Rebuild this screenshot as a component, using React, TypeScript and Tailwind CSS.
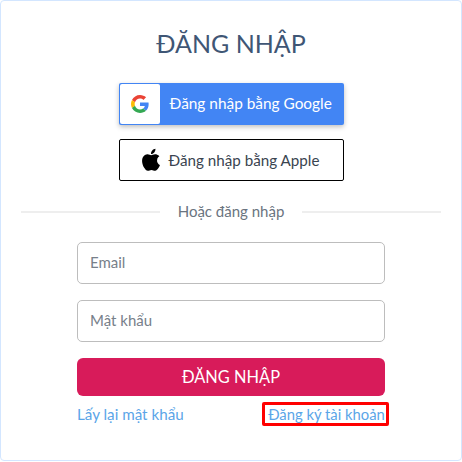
import { type FC } from 'react';

const GoogleIcon: FC = () => (
    <svg width="18" height="18" viewBox="0 0 48 48">
        <path fill="#EA4335" d="M24 9.5c3.5 0 6.7 1.2 9.2 3.6l6.9-6.9C35.900 2.400 30.500 0 24 0 14.600 0 6.500 5.400 2.600 13.200l8 6.200C12.500 13.700 17.800 9.500 24 9.500z" />
        <path fill="#4285F4" d="M47 24.500c0-1.600-.1-3.100-.4-4.500H24v9h12.900c-.6 3-2.200 5.500-4.800 7.200l7.700 6C44.300 38 47 31.800 47 24.500z" />
        <path fill="#FBBC05" d="M10.600 28.600c-.5-1.400-.8-3-.8-4.600s.3-3.200.8-4.600l-8-6.200C.9 16.500 0 20.100 0 24s.9 7.500 2.600 10.800l8-6.200z" />
        <path fill="#34A853" d="M24 48c6.500 0 11.900-2.100 15.800-5.800l-7.700-6c-2.100 1.400-4.900 2.300-8.100 2.300-6.200 0-11.500-4.200-13.400-9.900l-8 6.200C6.500 42.600 14.600 48 24 48z" />
    </svg>
);

const AppleIcon: FC = () => (
    <svg width="24" height="24" viewBox="0 0 24 24" fill="#000">
        <path d="M17.050 12.540c-.03-2.780 2.270-4.120 2.370-4.180-1.290-1.890-3.300-2.150-4.020-2.180-1.710-.17-3.340 1.010-4.210 1.010-.87 0-2.210-.98-3.630-.96-1.870.03-3.590 1.090-4.550 2.760-1.940 3.370-.5 8.350 1.390 11.080.92 1.340 2.020 2.840 3.460 2.790 1.390-.06 1.920-.9 3.600-.9s2.150.9 3.620.87c1.500-.03 2.450-1.360 3.360-2.710 1.060-1.550 1.500-3.060 1.520-3.130-.03-.02-2.910-1.120-2.910-4.450zM14.290 4.380c.77-.93 1.280-2.220 1.140-3.510-1.100.04-2.440.73-3.230 1.660-.71.82-1.330 2.130-1.160 3.390 1.230.1 2.480-.62 3.250-1.540z" />
    </svg>
);

const App: FC = () => {
    return (
        <div className="h-[462px] w-[462px] bg-white font-['Lato','Noto_Sans',sans-serif] text-[#3c4858]">
            <div className="flex h-[461px] w-[462px] flex-col items-center rounded-[4px] border border-[#d3e6ff] px-5 pt-[24px]">
                <h1 className="text-[25px] leading-[36px] font-normal text-[#3f5675]">ĐĂNG NHẬP</h1>

                <button className="mt-[22px] flex h-[42px] w-[225px] items-center rounded-[2px] bg-[#4285f4] p-px text-white shadow-[0_2px_5px_rgba(0,0,0,0.25)]">
                    <span className="flex h-10 w-10 items-center justify-center rounded-[2px] bg-white">
                        <GoogleIcon />
                    </span>
                    <span className="ml-[10px] text-[15.400px]">Đăng nhập bằng Google</span>
                </button>

                <button className="mt-[14px] flex h-[42px] w-[225px] items-center justify-center gap-[5px] rounded-[2px] border border-black bg-white pr-[3px] text-[15.200px] text-[#3a4450]">
                    <AppleIcon />
                    <span>Đăng nhập bằng Apple</span>
                </button>

                <div className="mt-[19px] flex h-[22px] w-full items-center">
                    <div className="mt-[2px] h-[2px] flex-1 bg-[#eeeeee]" />
                    <span className="w-[142px] text-center text-[15px] text-[#6a7480]">Hoặc đăng nhập</span>
                    <div className="mt-[2px] h-[2px] flex-1 bg-[#eeeeee]" />
                </div>

                <input
                    placeholder="Email"
                    className="mt-5 h-[42px] w-[308px] rounded-[5px] border border-[#bdbdbd] px-3 pb-[2px] text-[15px] outline-none placeholder:text-[#77808a]"
                />
                <input
                    placeholder="Mật khẩu"
                    className="mt-4 h-[42px] w-[308px] rounded-[5px] border border-[#bdbdbd] px-3 pb-[2px] text-[15px] outline-none placeholder:text-[#77808a]"
                />

                <button className="mt-4 h-[38px] w-[308px] rounded-[6px] bg-[#d81b5a] text-[16.400px] text-white">ĐĂNG NHẬP</button>

                <div className="mt-[6px] flex w-[308px] items-center justify-between">
                    <a className="text-[15.200px] text-[#5aa5e8]">Lấy lại mật khẩu</a>
                    <a className="mr-[-4px] flex h-6 w-[127px] items-center justify-center rounded-[2px] border-[3px] border-[#ff0000] pl-[2px] text-[14.800px] text-[#5aa5e8]">Đăng ký tài khoản</a>
                </div>
            </div>
        </div>
    );
};

export default App;
